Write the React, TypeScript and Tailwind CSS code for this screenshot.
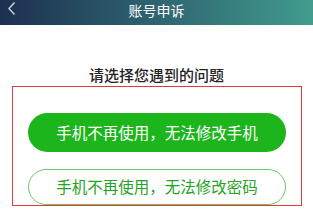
const FONT = { fontFamily: '"Noto Sans CJK SC", "Noto Sans", sans-serif' };

export default function App() {
  return (
    <div className="w-[313px] h-[209px] bg-white overflow-hidden" style={FONT}>
      <div className="relative h-[25px] bg-gradient-to-r from-[#1d3050] to-[#419c8e] flex items-start justify-center">
        <svg className="absolute left-0 top-0" width="20" height="20" viewBox="0 0 20 20">
          <polyline points="14.5,2.5 9,8.5 14.5,14.5" fill="none" stroke="#c9d3dc" strokeWidth="1.4" />
        </svg>
        <span className="text-[14px] leading-[20px] text-white">账号申诉</span>
      </div>
      <p className="mt-[40px] text-center text-[15px] leading-[20px] font-medium text-[#222]">请选择您遇到的问题</p>
      <div className="ml-[12px] mt-[1px] w-[290px] h-[120px] border border-[#e53935] overflow-hidden px-[15px] pt-[26px] flex flex-col gap-[17px]">
        <button className="h-[39px] shrink-0 rounded-full bg-[#1cb51c] text-white text-[15.5px]">
          手机不再使用，无法修改手机
        </button>
        <button className="h-[36px] shrink-0 rounded-full border border-[#6cc66c] text-[#24a324] text-[15.5px]">
          手机不再使用，无法修改密码
        </button>
      </div>
    </div>
  );
}
